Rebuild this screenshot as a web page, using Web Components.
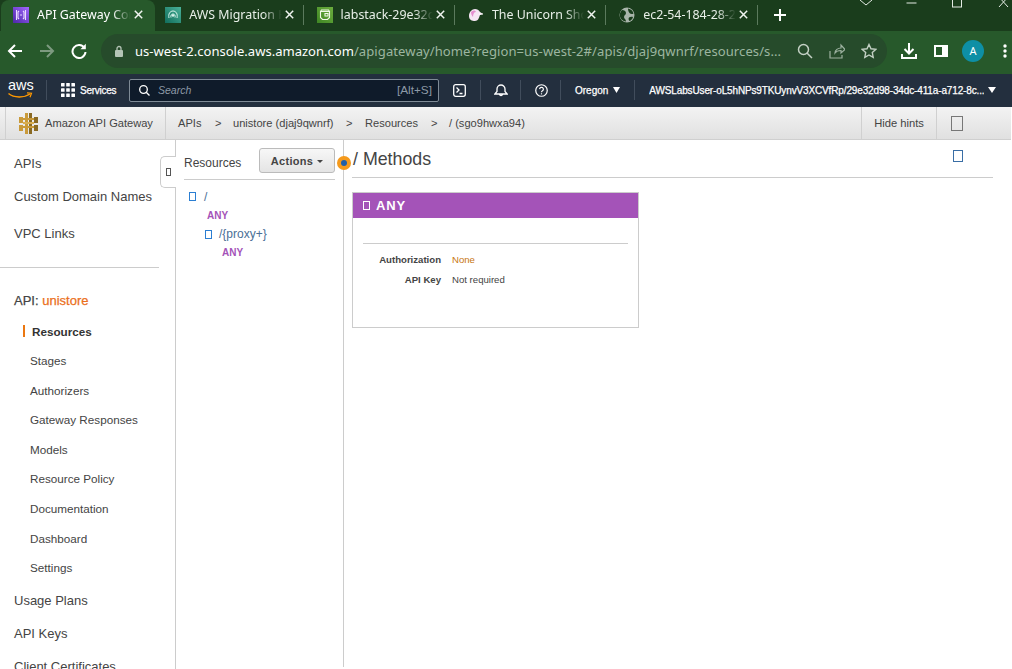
<!DOCTYPE html>
<html lang="en"><head><meta charset="utf-8"><title>API Gateway</title>
<style>
html,body{margin:0;padding:0;height:669px;width:1012px;overflow:hidden;background:#fff}
body{font-family:"Liberation Sans",Arial,sans-serif;color:#444;display:flex;flex-direction:column}
</style></head><body>
<browser-tabs>
  <browser-tab active label="API Gateway Console"><svg slot="icon" viewBox="0 0 16 16" width="16" height="16"><defs><linearGradient id="p" x1="0" y1="1" x2="1" y2="0"><stop offset="0" stop-color="#4d27a8"/><stop offset="1" stop-color="#a166ff"/></linearGradient></defs><rect width="16" height="16" fill="url(#p)"/><path d="M3.5 3v10M12.500 3v10M6 4 5 5v6l1 1M10 4l1 1v6l-1 1M7 8h2" fill="none" stroke="#eadcff" stroke-width="1.100"/></svg></browser-tab>
  <browser-tab label="AWS Migration Hub"><svg slot="icon" viewBox="0 0 16 16" width="16" height="16"><defs><linearGradient id="t" x1="0" y1="1" x2="1" y2="0"><stop offset="0" stop-color="#116d5b"/><stop offset="1" stop-color="#4ab29a"/></linearGradient></defs><rect width="16" height="16" fill="url(#t)"/><path d="M4 11c-1-4 1-7 4-7s5 3 4 7M6 10.500c-.6-2 .4-3.500 2-3.500s2.600 1.500 2 3.500" fill="none" stroke="#d6f2ea" stroke-width="1"/><circle cx="8" cy="8.500" r="1.200" fill="#d6f2ea"/></svg></browser-tab>
  <browser-tab label="labstack-29e32d98-34dc"><svg slot="icon" viewBox="0 0 16 16" width="16" height="16"><defs><linearGradient id="g" x1="0" y1="1" x2="1" y2="0"><stop offset="0" stop-color="#3f8624"/><stop offset="1" stop-color="#6cae3e"/></linearGradient></defs><rect width="16" height="16" fill="url(#g)"/><path d="M3.500 4.500h9v6l-2 2h-5l-2-2zM3.500 4.500l1-1.500h7l1 1.500M8 6.500h3v2.500H8z" fill="none" stroke="#eef7e6" stroke-width="1.100"/></svg></browser-tab>
  <browser-tab label="The Unicorn Shop"><svg slot="icon" viewBox="0 0 16 16" width="16" height="16"><path d="M1 9c0-4 3-7 6-7 2 0 4 1 5 3l3 2-3 1c-1 3-2 6-5 6S1 13 1 9z" fill="#f6e6f4"/><path d="M3 5c2-2 4-2 5 0-2 0-3 2-3 5-1-1-2-3-2-5z" fill="#e58fd0"/><path d="M11 7l4 0" stroke="#fff" stroke-width="1"/></svg></browser-tab>
  <browser-tab label="ec2-54-184-28-241.us-west"><svg slot="icon" viewBox="0 0 16 16" width="16" height="16"><circle cx="8" cy="8" r="7.500" fill="#a9b5aa"/><path d="M3 3c2 0 4 1 4 3S5 8 5 10s2 2 2 4.500C3 14 .8 11 .8 8 .8 6 1.800 4 3 3zM9 1.500c3 .5 5 2.500 5.500 5-1.500 1-3 .5-4-.5S9 3 9 1.500zM10 10.500c1-1 3-1 4-.5-.5 2-2 3.500-3.500 4-1-1-1.200-2.500-.5-3.500z" fill="#1a3d1c"/></svg></browser-tab>
</browser-tabs>
<browser-toolbar url-host="us-west-2.console.aws.amazon.com" url-path="/apigateway/home?region=us-west-2#/apis/djaj9qwnrf/resources/s..."></browser-toolbar>
<aws-nav></aws-nav>
<crumb-bar></crumb-bar>
<console-body>
  <side-nav slot="side">
    <side-item kind="top">APIs</side-item>
    <side-item kind="top">Custom Domain Names</side-item>
    <side-item kind="top" style="margin-top:4px">VPC Links</side-item>
    <nav-rule></nav-rule>
    <side-item kind="top"><span style="-webkit-text-stroke:.25px #444">API:&nbsp;</span><span style="color:#eb6f1c;-webkit-text-stroke:.25px #eb6f1c">unistore</span></side-item>
    <side-item kind="current" style="margin-top:-.8px">Resources</side-item>
    <side-item>Stages</side-item>
    <side-item>Authorizers</side-item>
    <side-item>Gateway Responses</side-item>
    <side-item>Models</side-item>
    <side-item>Resource Policy</side-item>
    <side-item>Documentation</side-item>
    <side-item>Dashboard</side-item>
    <side-item>Settings</side-item>
    <side-item kind="top" style="margin-top:1.800px">Usage Plans</side-item>
    <side-item kind="top">API Keys</side-item>
    <side-item kind="top">Client Certificates</side-item>
  </side-nav>
  <resource-tree slot="tree"></resource-tree>
  <method-view slot="main"></method-view>
</console-body>
<script>
function def(name, css, html, extra){
  customElements.define(name, class extends HTMLElement{
    connectedCallback(){
      if(this.shadowRoot) return;
      const r=this.attachShadow({mode:'open'});
      r.innerHTML='<style>'+css+'</style>'+(typeof html==='function'?html(this):html);
      if(extra) extra(this,r);
    }
  });
}
const UI='"Noto Sans","Open Sans",sans-serif';

def('browser-tabs',`:host{display:flex;height:31px;background:#1a3d1c;position:relative;flex:none;overflow:hidden}
.plus{width:20px;height:29px;margin-left:12px;display:flex;align-items:center;justify-content:center}
.win{margin-left:auto;display:flex;align-items:flex-start;width:161px;position:relative}
svg{display:block}`,
`<slot></slot><div class="plus"><svg width="12" height="12" viewBox="0 0 12 12"><path d="M6 0v12M0 6h12" stroke="#fff" stroke-width="2"/></svg></div>
<div class="win">
 <svg width="161" height="10" viewBox="0 0 161 10" fill="none" stroke="#e4ece4" stroke-width="1">
  <path d="M9 0l6 5 6-5"/><path d="M55.500 3h10"/><rect x="101.500" y="-3" width="9" height="10"/><path d="M148 -3l9 10M157 -3l-9 10"/>
 </svg></div>`);

def('browser-tab',`:host{display:flex;align-items:center;width:151.300px;height:29px;box-sizing:border-box;padding:0 10px 0 13px;position:relative;color:#e8efe8;font:12.400px ${UI};flex:none;margin-bottom:2px}
:host([active]){background:#27592b;border-radius:8px 8px 0 0;width:154px;margin-right:-2.700px;color:#fff;z-index:1;margin-left:1px;padding:0 12px 2px 12px;height:31px;margin-bottom:0}
:host(:not([active]))::after{content:"";position:absolute;right:0;top:5px;height:20px;width:1px;background:#5b7a5d}
:host(:first-child)::after{display:none}
.t{width:101px;margin-left:8px;white-space:nowrap;overflow:hidden;-webkit-mask-image:linear-gradient(90deg,#000 80%,transparent 100%);mask-image:linear-gradient(90deg,#000 80%,transparent 100%)}
.x{margin-left:3px;flex:none;display:block}
::slotted(svg){flex:none;display:block}`,
h=>`<slot name="icon"></slot><span class="t">${h.getAttribute('label')}</span><svg class="x" width="9" height="9" viewBox="0 0 9 9"><path d="M.8.800l7.400 7.400M8.200.800L.8 8.200" stroke="#f0f4f0" stroke-width="1.500"/></svg>`);

def('browser-toolbar',`:host{display:flex;align-items:center;height:43px;background:#27592b;flex:none;padding:0 0 4px 0;box-sizing:border-box;color:#fff;font:13.050px ${UI}}
.nav{display:flex;align-items:center;width:101px;padding-left:7px;box-sizing:border-box;gap:16px}
.box{width:786px;height:34px;border-radius:17px;background:#264b2b;display:flex;align-items:center;padding-left:13px;box-sizing:border-box;flex:none}
.u{margin-left:11px;white-space:nowrap;width:660px;flex:none;overflow:hidden}
.u i{font-style:normal;color:#9db6a0;letter-spacing:.08px}
.end{display:flex;gap:16px;align-items:center;margin-left:2px}
.r{display:flex;align-items:center;flex:none}
.av{width:22px;height:22px;border-radius:50%;background:#0e8fa5;color:#fff;font:11px ${UI};display:flex;align-items:center;justify-content:center}
svg{display:block;flex:none}`,
h=>`<div class="nav">
<svg width="16" height="16" viewBox="0 0 16 16" fill="none" stroke="#fff" stroke-width="2"><path d="M15 8H2M8 2L2 8l6 6"/></svg>
<svg width="16" height="16" viewBox="0 0 16 16" fill="none" stroke="#7d9a80" stroke-width="2"><path d="M1 8h13M8 2l6 6-6 6"/></svg>
<svg width="16" height="16" viewBox="0 0 16 16" fill="none" stroke="#fff" stroke-width="2"><path d="M13.500 5A6.500 6.500 0 1 0 14.500 9"/><path d="M14.800 .8v5.400H9.400z" fill="#fff" stroke="none"/></svg>
</div>
<div class="box">
<svg width="10" height="12" viewBox="0 0 10 12"><rect x="1" y="5" width="8" height="7" rx="1" fill="#b4c4b6"/><path d="M3 5V3.500a2 2 0 0 1 4 0V5" fill="none" stroke="#b4c4b6" stroke-width="1.300"/></svg>
<span class="u">${h.getAttribute('url-host')}<i>${h.getAttribute('url-path')}</i></span>
<div class="end">
<svg width="16" height="16" viewBox="0 0 16 16" fill="none" stroke="#c3d0c4" stroke-width="1.500"><circle cx="6.500" cy="6.500" r="5"/><path d="M10 10l5 5"/></svg>
<svg width="16" height="16" viewBox="0 0 16 16" fill="none" stroke="#9db1a0" stroke-width="1.200"><path d="M1 8v7h12v-3M6 10c0-3 3-5 6-5V2l4 4.500L12 10V7.500c-2.500 0-5 1-6 2.500z"/></svg>
<svg width="16" height="16" viewBox="0 0 16 16" fill="none" stroke="#c3d0c4" stroke-width="1.400"><path d="M8 1.500l2 4.300 4.700.6-3.400 3.200.9 4.700L8 12l-4.200 2.300.9-4.700L1.300 6.400l4.700-.6z"/></svg>
</div></div>
<div class="r" style="margin-left:14px"><svg width="16" height="16" viewBox="0 0 16 16" fill="none" stroke="#fff" stroke-width="2"><path d="M8 0v10M3.500 6L8 10.500 12.500 6M1 11v4h14v-4"/></svg></div>
<div class="r" style="margin-left:17px"><svg width="14" height="12" viewBox="0 0 14 12"><rect x="1" y="1" width="12" height="10" fill="none" stroke="#fff" stroke-width="2"/><rect x="8" y="1" width="5" height="10" fill="#fff"/></svg></div>
<div class="r" style="margin-left:14px"><div class="av">A</div></div>
<div class="r" style="margin-left:19px"><svg width="4" height="14" viewBox="0 0 4 14" fill="#fff"><circle cx="2" cy="2" r="1.700"/><circle cx="2" cy="7" r="1.700"/><circle cx="2" cy="12" r="1.700"/></svg></div>`);

def('aws-nav',`:host{display:flex;align-items:center;height:33px;background:#232f3e;color:#fff;flex:none;font:10px "Liberation Sans",sans-serif;-webkit-text-stroke:.25px #fff;box-sizing:border-box;padding-bottom:1px;white-space:nowrap}
.sep{width:1px;height:20px;background:#414d5c;flex:none}
.logo{width:46px;padding-left:8px;box-sizing:border-box;height:24px;position:relative;flex:none;font:14.500px/14px "Liberation Sans",sans-serif;-webkit-text-stroke:0}
.logo svg{position:absolute;left:8px;top:14px}
.search{width:310px;height:23px;margin-left:13px;background:#0f1b2a;border:1px solid #7f8b96;border-radius:2px;box-sizing:border-box;display:flex;align-items:center;padding:0 6px 0 9px;flex:none;color:#8d99a6;font-size:10.500px;-webkit-text-stroke:0}
.search i{margin-left:8px;flex:1}
.search b{font-weight:normal;font-size:11.800px}
svg{display:block;flex:none}`,
`<div class="logo">aws<svg width="25" height="7" viewBox="0 0 25 7" fill="none"><path d="M.5 1.500C6 6 16 6 22 2" stroke="#ff9900" stroke-width="1.500"/><path d="M19 .8l4.500.4-1.500 4" stroke="#ff9900" stroke-width="1.200"/></svg></div><div class="sep"></div>
<svg style="margin-left:14px" width="14" height="14" viewBox="0 0 14 14" fill="#fff" stroke="none"><rect width="3.600" height="3.600" rx=".5"/><rect x="5.200" width="3.600" height="3.600" rx=".5"/><rect x="10.400" width="3.600" height="3.600" rx=".5"/><rect y="5.200" width="3.600" height="3.600" rx=".5"/><rect x="5.200" y="5.200" width="3.600" height="3.600" rx=".5"/><rect x="10.400" y="5.200" width="3.600" height="3.600" rx=".5"/><rect y="10.400" width="3.600" height="3.600" rx=".5"/><rect x="5.200" y="10.400" width="3.600" height="3.600" rx=".5"/><rect x="10.400" y="10.400" width="3.600" height="3.600" rx=".5"/></svg>
<span style="margin-left:5px;width:36px;letter-spacing:-.25px">Services</span>
<div class="search"><svg width="11" height="11" viewBox="0 0 11 11" fill="none" stroke="#fff" stroke-width="1.300"><circle cx="4.500" cy="4.500" r="3.800"/><path d="M7.200 7.200L10.500 10.500"/></svg><i>Search</i><b>[Alt+S]</b></div>
<svg style="margin-left:14px" width="13" height="13" viewBox="0 0 13 13" fill="none" stroke="#fff" stroke-width="1.300"><rect x=".7" y=".7" width="11.600" height="11.600" rx="2"/><path d="M3.500 3.500l2.500 2.500-2.500 2.500M6.500 9.500h3"/></svg>
<div class="sep" style="margin-left:14px"></div>
<svg style="margin-left:13px" width="14" height="13" viewBox="0 0 14 13" fill="none" stroke="#fff" stroke-width="1.300"><path d="M.8 10h12.400L11 7.500V5a4 4 0 0 0-8 0v2.500zM7 1V.2M5.500 10.500a1.600 1.600 0 0 0 3 0"/></svg>
<div class="sep" style="margin-left:12px"></div>
<svg style="margin-left:14px" width="13" height="13" viewBox="0 0 14 14" fill="none" stroke="#fff" stroke-width="1.300"><circle cx="7" cy="7" r="6.200"/><path d="M5 5.500a2 2 0 1 1 3 1.800c-.7.400-1 .8-1 1.700"/><path d="M7 10v1.200"/></svg>
<div class="sep" style="margin-left:12px"></div>
<span style="margin-left:14px">Oregon</span>
<svg style="margin-left:5px" width="7" height="6" viewBox="0 0 7 6" fill="#fff" stroke="none"><path d="M0 0h7L3.500 6z"/></svg>
<div class="sep" style="margin-left:14px"></div>
<span style="margin-left:14px;width:335px;overflow:hidden;letter-spacing:-.14px">AWSLabsUser-oL5hNPs9TKUynvV3XCVfRp/29e32d98-34dc-411a-a712-8c...</span>
<svg style="margin-left:4px" width="8" height="6" viewBox="0 0 8 6" fill="#fff" stroke="none"><path d="M0 0h8L4 6z"/></svg>`);

def('crumb-bar',`:host{display:flex;align-items:stretch;height:33px;flex:none;background:linear-gradient(#f3f3f3,#e0e0e0);border-bottom:1px solid #cfcfcf;box-sizing:border-box;font:11.100px "Liberation Sans",sans-serif;color:#444;white-space:nowrap;margin-right:1px}
.lead{width:6px;border-right:1px solid #d0d0d0;flex:none;box-sizing:border-box}
.brand{width:160px;border-right:1px solid #d0d0d0;flex:none;display:flex;align-items:center;padding-left:13px;box-sizing:border-box;gap:7px}
.path{display:flex;align-items:center;padding-left:12px;flex:1}
.path span{display:block}
.hints{width:76px;box-sizing:border-box;border-left:1px solid #d0d0d0;border-right:1px solid #d0d0d0;display:flex;align-items:center;justify-content:center;flex:none;font-size:11.200px}
.end{flex:none;width:74px;padding-left:14px;box-sizing:border-box;display:flex;align-items:center}
.end i{display:block;width:12px;height:15px;box-sizing:border-box;border:1px solid #777}
svg{display:block;flex:none}`,
`<div class="lead"></div>
<div class="brand"><svg width="19" height="21" viewBox="0 0 19 21"><g fill="#c99a3a"><rect x="6" y="0" width="3" height="21"/><rect x="10" y="0" width="3" height="21" fill="#8a6a24"/><rect x="0" y="4" width="4" height="6"/><rect x="15" y="4" width="4" height="6" fill="#8a6a24"/><rect x="0" y="12" width="4" height="6"/><rect x="15" y="12" width="4" height="6" fill="#8a6a24"/><rect x="4" y="5" width="11" height="2"/><rect x="4" y="9" width="11" height="2" fill="#d8ae52"/><rect x="4" y="13" width="11" height="2"/></g></svg><span>Amazon API Gateway</span></div>
<div class="path"><span style="width:37px">APIs</span><span style="width:18px">&gt;</span><span style="width:113px">unistore (djaj9qwnrf)</span><span style="width:19px">&gt;</span><span style="width:66px">Resources</span><span style="width:18px">&gt;</span><span>/ (sgo9hwxa94)</span></div>
<div class="hints">Hide hints</div>
<div class="end"><i></i></div>`);

def('console-body',`:host{display:grid;grid-template-columns:176px 168px 1fr;flex:1;min-height:0;overflow:hidden}`,
`<slot name="side"></slot><slot name="tree"></slot><slot name="main"></slot>`);

def('side-nav',`:host{display:flex;flex-direction:column;border-right:1px solid #ccc;box-sizing:border-box;padding-top:6.500px;height:529px;overflow:hidden;position:relative}`,`<slot></slot>`);
def('nav-rule',`:host{display:block;flex:none;height:1px;background:#ccc;width:159px;margin:17.500px 0 16px}`,``);
def('side-item',`:host{display:flex;align-items:center;flex:none;height:29.600px;box-sizing:border-box;padding-left:30px;font-size:11.700px;color:#444;white-space:nowrap;position:relative}
:host([kind=top]){height:33px;padding-left:14px;font-size:13px}
:host([kind=current]){padding-left:32px;font-weight:bold;color:#333}
:host([kind=current])::before{content:"";position:absolute;left:23px;top:9px;width:2px;height:12px;background:#eb7711}`,`<slot></slot>`);

def('resource-tree',`:host{display:block;position:relative;border-right:1px solid #ccc;box-sizing:border-box;height:527px;padding:8px 8px 0 8px;font:12px "Liberation Sans",sans-serif;color:#444}
.head{display:flex;align-items:center;justify-content:space-between;height:32px;border-bottom:1px solid #ccc;box-sizing:border-box;padding-bottom:7px}
.head span{padding-top:6px}
button{width:76px;height:25px;border:1px solid #bbb;border-radius:3px;background:linear-gradient(#f7f7f7,#e4e4e4);font:bold 11px "Liberation Sans",sans-serif;color:#444;padding:1px 0 0;letter-spacing:.3px}
button i{display:inline-block;width:0;height:0;border:3px solid transparent;border-top-color:#444;border-bottom:0;margin-left:4px;vertical-align:2px}
.row{display:flex;align-items:center;height:19px;color:#4a6f96}
.box{display:block;width:5px;height:7px;border:1px solid #2b7ed2;flex:none}
.r1{margin-top:7px;padding-left:5px;gap:8px}
.r2{padding-left:21px;gap:7px;height:18px}
.any{display:flex;align-items:center;height:19px;font:bold 10px "Liberation Sans",sans-serif;color:#a453b8}
.tab{position:absolute;left:-16px;top:16px;width:16px;height:32px;box-sizing:border-box;background:#fff;border:1px solid #ccc;border-right:0;border-radius:5px 0 0 5px;display:flex;align-items:center;justify-content:center;z-index:2}
.tab b{display:block;width:3px;height:6px;border:1px solid #555}
.dot{position:absolute;right:-8px;top:16px;width:14px;height:14px;border-radius:50%;background:#f59a1c;display:flex;align-items:center;justify-content:center;z-index:3}
.dot b{display:block;width:6px;height:6px;border-radius:50%;background:#1f5fa8}`,
`<div class="tab"><b></b></div><div class="dot"><b></b></div>
<div class="head"><span>Resources</span><button>Actions<i></i></button></div>
<div class="row r1"><i class="box"></i><span>/</span></div>
<div class="any" style="padding-left:23px">ANY</div>
<div class="row r2"><i class="box"></i><span>/{proxy+}</span></div>
<div class="any" style="padding-left:38px">ANY</div>`);

def('method-view',`:host{display:block;position:relative;padding:0 19px 0 8px;font:12px "Liberation Sans",sans-serif;color:#444}
h2{margin:0;font:normal 17.800px/38px "Liberation Sans",sans-serif;color:#444;height:38px;border-bottom:1px solid #ccc;box-sizing:border-box;padding-left:1px}
.hint{position:absolute;right:49px;top:10px;width:8px;height:10px;border:1px solid #3a6ea5}
.card{width:287px;height:136px;margin-top:14px;border:1px solid #ccc;box-sizing:border-box}
.bar{height:25px;background:#a453b8;color:#fff;font:bold 13px/25px "Liberation Sans",sans-serif;display:flex;align-items:center;padding-left:10px;gap:6px;letter-spacing:.8px}
.bar i{display:block;width:5px;height:7px;border:1px solid #fff}
.rule{height:1px;background:#ccc;margin:25px 10px 0}
dl{margin:10px 0 0;display:grid;grid-template-columns:88px 1fr;column-gap:11px;row-gap:8px;font-size:9.600px;line-height:12px}
dt{text-align:right;font-weight:bold;color:#444}
dd{margin:0;color:#444}
.none{color:#c7760f}`,
`<h2>/ Methods</h2><i class="hint"></i>
<div class="card"><div class="bar"><i></i>ANY</div><div class="rule"></div>
<dl><dt>Authorization</dt><dd class="none">None</dd><dt>API Key</dt><dd>Not required</dd></dl></div>`);
</script>
</body></html>
